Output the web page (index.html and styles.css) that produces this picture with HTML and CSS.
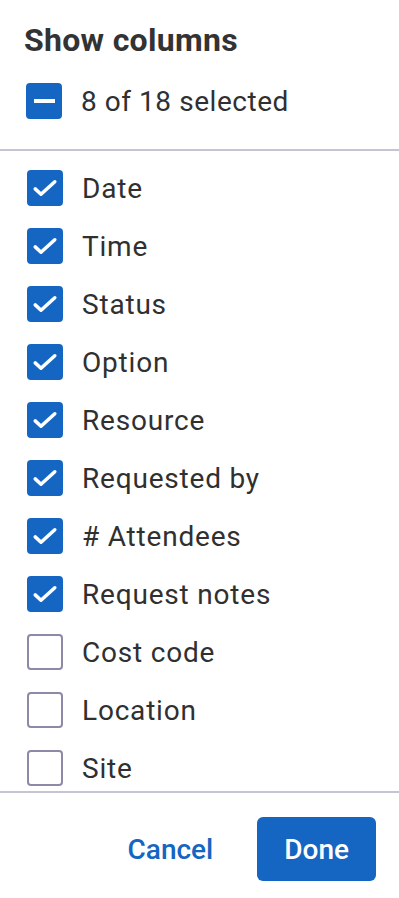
FILE: index.html
```html
<!DOCTYPE html>
<html lang="en">
  <head>
    <meta charset="UTF-8" />
    <meta name="viewport" content="width=device-width, initial-scale=1.0" />
    <title>Show columns</title>
    <link rel="stylesheet" href="styles.css">
  </head>
  <body>
    <div class="panel">
      <div class="header">
        <h2>Show columns</h2>
        <div class="row all">
          <span class="box on"><span class="dash"></span></span>
          <span>8 of 18 selected</span>
        </div>
      </div>

      <div class="list">
        <div class="row"><span class="box on"><svg viewBox="0 0 36 36"><path d="M7 19l6.5 6L29 11" /></svg></span><span>Date</span></div>
        <div class="row"><span class="box on"><svg viewBox="0 0 36 36"><path d="M7 19l6.5 6L29 11" /></svg></span><span>Time</span></div>
        <div class="row"><span class="box on"><svg viewBox="0 0 36 36"><path d="M7 19l6.5 6L29 11" /></svg></span><span>Status</span></div>
        <div class="row"><span class="box on"><svg viewBox="0 0 36 36"><path d="M7 19l6.5 6L29 11" /></svg></span><span>Option</span></div>
        <div class="row"><span class="box on"><svg viewBox="0 0 36 36"><path d="M7 19l6.5 6L29 11" /></svg></span><span>Resource</span></div>
        <div class="row"><span class="box on"><svg viewBox="0 0 36 36"><path d="M7 19l6.5 6L29 11" /></svg></span><span>Requested by</span></div>
        <div class="row"><span class="box on"><svg viewBox="0 0 36 36"><path d="M7 19l6.5 6L29 11" /></svg></span><span># Attendees</span></div>
        <div class="row"><span class="box on"><svg viewBox="0 0 36 36"><path d="M7 19l6.5 6L29 11" /></svg></span><span>Request notes</span></div>
        <div class="row"><span class="box"></span><span>Cost code</span></div>
        <div class="row"><span class="box"></span><span>Location</span></div>
        <div class="row"><span class="box"></span><span>Site</span></div>
      </div>

      <div class="footer">
        <button class="btn link">Cancel</button>
        <button class="btn primary">Done</button>
      </div>
    </div>
  </body>
</html>
```

FILE: styles.css
```css
body {
  margin: 0;
  background-color: #fff;
  font-family: Roboto, "Liberation Sans", sans-serif;
  color: #303030;
}
.panel {
  display: flex;
  flex-direction: column;
  height: 898px;
}
.header {
  padding: 20px 24px 0 26px;
  border-bottom: 2px solid #c3c5d3;
}
h2 {
  margin: 0 0 0 -2px;
  font-size: 32px;
  line-height: 40px;
  font-weight: 700;
  letter-spacing: 0.3px;
  color: #333;
}
.row {
  display: flex;
  align-items: center;
  gap: 19px;
  height: 58px;
  font-size: 28px;
  letter-spacing: 0.8px;
}
.header .row {
  height: 48px;
  margin: 17px 0 24px;
  letter-spacing: 0.55px;
}
.box {
  flex: none;
  box-sizing: border-box;
  width: 36px;
  height: 36px;
  border: 2px solid #8e89a6;
  border-radius: 4px;
  display: flex;
  align-items: center;
  justify-content: center;
}
.box.on {
  background-color: #1565c2;
  border-color: #1565c2;
}
.box svg {
  width: 36px;
  height: 36px;
  fill: none;
  stroke: #fff;
  stroke-width: 4;
  stroke-linecap: round;
  stroke-linejoin: round;
}
.dash {
  width: 21px;
  height: 4px;
  background-color: #fff;
}
.list {
  flex: 1;
  min-height: 0;
  overflow: hidden;
  padding: 8px 24px 0 27px;
}
.footer {
  flex: none;
  display: flex;
  justify-content: flex-end;
  align-items: center;
  gap: 17px;
  padding: 24px 23px 17px;
  border-top: 2px solid #c3c5d3;
}
.btn {
  font-family: Roboto, "Liberation Sans", sans-serif;
  font-size: 28px;
  font-weight: 500;
  height: 64px;
  padding: 0 27px;
  border: none;
  border-radius: 6px;
  cursor: pointer;
}
.btn.link {
  background: none;
  color: #1565c2;
}
.btn.primary {
  background-color: #1565c2;
  color: #fff;
}
```
